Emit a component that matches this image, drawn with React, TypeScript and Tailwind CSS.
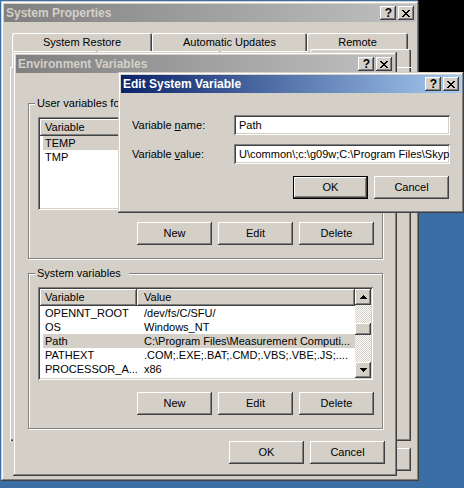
import type { ReactNode } from "react";

const winFrame =
  "shadow-[inset_-1px_-1px_#404040,inset_1px_1px_#d4d0c8,inset_-2px_-2px_#808080,inset_2px_2px_#ffffff]";
const btn3d = "shadow-[inset_-1px_-1px_#404040,inset_1px_1px_#ffffff,inset_-2px_-2px_#808080]";
const sunken =
  "shadow-[inset_1px_1px_#808080,inset_-1px_-1px_#ffffff,inset_2px_2px_#404040,inset_-2px_-2px_#d4d0c8]";
const tab3d = "shadow-[inset_1px_1px_#ffffff,inset_-1px_0_#404040,inset_-2px_0_#808080]";

const userVars: [string, string][] = [
  ["TEMP", "%USERPROFILE%\\Local Settings\\Temp"],
  ["TMP", "%USERPROFILE%\\Local Settings\\Temp"],
];

const systemVars: [string, string][] = [
  ["OPENNT_ROOT", "/dev/fs/C/SFU/"],
  ["OS", "Windows_NT"],
  ["Path", "C:\\Program Files\\Measurement Computi..."],
  ["PATHEXT", ".COM;.EXE;.BAT;.CMD;.VBS;.VBE;.JS;...."],
  ["PROCESSOR_A...", "x86"],
];

function XGlyph() {
  return (
    <svg width="8" height="7" viewBox="0 0 8 7" shapeRendering="crispEdges">
      <path
        fill="#000"
        d="M0 0h2v1H0z M6 0h2v1H6z M1 1h2v1H1z M5 1h2v1H5z M2 2h4v1H2z M3 3h2v1H3z M2 4h4v1H2z M1 5h2v1H1z M5 5h2v1H5z M0 6h2v1H0z M6 6h2v1H6z"
      />
    </svg>
  );
}

function Arrow({ down }: { down?: boolean }) {
  return (
    <svg width="7" height="4" viewBox="0 0 7 4" shapeRendering="crispEdges" className={down ? "rotate-180" : ""}>
      <path fill="#000" d="M3 0h1v1H3z M2 1h3v1H2z M1 2h5v1H1z M0 3h7v1H0z" />
    </svg>
  );
}

function CapBtn({ children }: { children: ReactNode }) {
  return (
    <div className={`flex h-[14px] w-[16px] items-center justify-center bg-[#d4d0c8] ${btn3d}`}>{children}</div>
  );
}

function Caption({ title, active }: { title: string; active?: boolean }) {
  return (
    <div
      className={`flex h-[18px] shrink-0 items-center pl-[2px] pr-[2px] ${
        active
          ? "bg-[linear-gradient(to_right,#0a246a,#a6caf0)] text-white"
          : "bg-[linear-gradient(to_right,#808080,#c0c0c0)] text-[#d4d0c8]"
      }`}
    >
      <span className="flex-1 truncate text-[12px] font-bold leading-[18px]">{title}</span>
      <div className="flex gap-[2px]">
        <CapBtn>
          <span className="pl-[1px] text-[12px] font-bold leading-none text-black">?</span>
        </CapBtn>
        <CapBtn>
          <XGlyph />
        </CapBtn>
      </div>
    </div>
  );
}

function Button({ children, isDefault }: { children: ReactNode; isDefault?: boolean }) {
  return (
    <div
      className={`flex h-[23px] w-[75px] shrink-0 items-center justify-center bg-[#d4d0c8] text-[11px] ${
        isDefault ? "border border-black" : ""
      } ${btn3d}`}
    >
      {children}
    </div>
  );
}

function Group({ label, children }: { label: string; children: ReactNode }) {
  return (
    <div className="relative w-[355px] border border-[#808080] px-[9px] pb-[13px] pt-[13px] shadow-[inset_1px_1px_#ffffff,1px_1px_#ffffff]">
      <span className="absolute left-[6px] top-[-8px] bg-[#d4d0c8] pl-[2px] pr-[8px] text-[11px] leading-[14px]">
        {label}
      </span>
      {children}
    </div>
  );
}

function ScrollBar() {
  return (
    <div className="flex w-[16px] shrink-0 flex-col">
      <div className={`flex h-[16px] items-center justify-center bg-[#d4d0c8] ${btn3d}`}>
        <Arrow />
      </div>
      <div className="flex-1 bg-[repeating-conic-gradient(#ffffff_0_25%,#d4d0c8_0_50%)] bg-[length:2px_2px] pt-[18px]">
        <div className={`h-[12px] bg-[#d4d0c8] ${btn3d}`} />
      </div>
      <div className={`flex h-[16px] items-center justify-center bg-[#d4d0c8] ${btn3d}`}>
        <Arrow down />
      </div>
    </div>
  );
}

function ListView({ rows, selected, scroll }: { rows: [string, string][]; selected: number; scroll?: boolean }) {
  return (
    <div className={`flex h-[93px] bg-white p-[2px] ${sunken}`}>
      <div className="flex min-w-0 flex-1 flex-col overflow-hidden">
        <div className="flex h-[17px] shrink-0 text-[11px] leading-[17px]">
          <div className={`w-[97px] shrink-0 bg-[#d4d0c8] pl-[5px] ${btn3d}`}>Variable</div>
          <div className={`flex-1 bg-[#d4d0c8] pl-[7px] ${btn3d}`}>Value</div>
        </div>
        {rows.map((r, i) => (
          <div key={r[0]} className="flex h-[14px] shrink-0 pl-[3px] text-[11px] leading-[14px]">
            <div className={`flex min-w-0 flex-1 ${i === selected ? "bg-[#d4d0c8]" : ""}`}>
              <span className="w-[94px] shrink-0 overflow-hidden whitespace-nowrap pl-[2px]">{r[0]}</span>
              <span className="min-w-0 flex-1 overflow-hidden whitespace-nowrap pl-[7px]">{r[1]}</span>
            </div>
          </div>
        ))}
      </div>
      {scroll && <ScrollBar />}
    </div>
  );
}

function GroupButtons() {
  return (
    <div className="mr-[-1px] mt-[12px] flex justify-end gap-[6px]">
      <Button>New</Button>
      <Button>Edit</Button>
      <Button>Delete</Button>
    </div>
  );
}

export default function App() {
  return (
    <div className="relative h-[488px] w-[464px] overflow-hidden bg-[#3a6ea5] font-['Liberation_Sans',Arial,sans-serif] text-black">
      <div className="absolute right-0 top-0 h-[140px] w-[46px] bg-black" />

      {/* System Properties */}
      <div className={`absolute left-[1px] top-[1px] flex h-[480px] w-[418px] flex-col bg-[#d4d0c8] p-[3px] ${winFrame}`}>
        <Caption title="System Properties" />
        <div className="ml-[6px] mt-[11px] w-[401px]">
          <div className="flex h-[18px] pl-[2px] text-[11px]">
            <div className={`flex w-[140px] items-center justify-center rounded-t-[2px] ${tab3d}`}>System Restore</div>
            <div className={`flex w-[155px] items-center justify-center rounded-t-[2px] ${tab3d}`}>Automatic Updates</div>
            <div className={`flex w-[101px] items-center justify-center rounded-t-[2px] ${tab3d}`}>Remote</div>
          </div>
          <div className="flex h-[16px] items-end text-[11px]">
            <div className={`ml-[2px] flex h-[16px] w-[85px] items-center justify-center rounded-t-[2px] ${tab3d}`}>General</div>
            <div className={`flex h-[16px] w-[123px] items-center justify-center rounded-t-[2px] ${tab3d}`}>Computer Name</div>
            <div className={`flex h-[16px] w-[90px] items-center justify-center rounded-t-[2px] ${tab3d}`}>Hardware</div>
            <div className={`flex h-[18px] w-[101px] items-center justify-center rounded-t-[2px] bg-[#d4d0c8] ${tab3d}`}>Advanced</div>
          </div>
          <div className="h-[374px] shadow-[inset_1px_1px_#ffffff,inset_-1px_-1px_#404040,inset_-2px_-2px_#808080]" />
          <div className="mt-[7px] flex justify-end gap-[6px]">
            <Button>OK</Button>
            <Button>Cancel</Button>
            <Button>Apply</Button>
          </div>
        </div>
      </div>

      {/* Environment Variables */}
      <div className={`absolute left-[13px] top-[52px] flex h-[424px] w-[384px] flex-col bg-[#d4d0c8] p-[3px] ${winFrame}`}>
        <Caption title="Environment Variables" />
        <div className="ml-[12px] mt-[30px]">
          <Group label="User variables for Owner">
            <ListView rows={userVars} selected={0} />
            <GroupButtons />
          </Group>
        </div>
        <div className="ml-[12px] mt-[14px]">
          <Group label="System variables">
            <ListView rows={systemVars} selected={2} scroll />
            <GroupButtons />
          </Group>
        </div>
        <div className="mr-[9px] mt-[12px] flex justify-end gap-[6px]">
          <Button>OK</Button>
          <Button>Cancel</Button>
        </div>
      </div>

      {/* Edit System Variable */}
      <div className={`absolute left-[118px] top-[72px] flex h-[141px] w-[346px] flex-col bg-[#d4d0c8] p-[3px] ${winFrame}`}>
        <Caption title="Edit System Variable" active />
        <div className="px-[11px] text-[11px]">
          <div className="mt-[22px] flex items-center">
            <span className="w-[102px] shrink-0">
              Variable <span className="underline">n</span>ame:
            </span>
            <div className={`h-[20px] w-[219px] overflow-hidden whitespace-nowrap bg-white pl-[5px] pr-[3px] leading-[20px] ${sunken}`}>
              Path
            </div>
          </div>
          <div className="mt-[9px] flex items-center">
            <span className="w-[102px] shrink-0">
              Variable <span className="underline">v</span>alue:
            </span>
            <div className={`h-[20px] w-[219px] overflow-hidden whitespace-nowrap bg-white pl-[5px] pr-[3px] leading-[20px] ${sunken}`}>
              U\common\;c:\g09w;C:\Program Files\Skyp
            </div>
          </div>
          <div className="mr-[1px] mt-[12px] flex justify-end gap-[6px]">
            <Button isDefault>OK</Button>
            <Button>Cancel</Button>
          </div>
        </div>
      </div>
    </div>
  );
}
